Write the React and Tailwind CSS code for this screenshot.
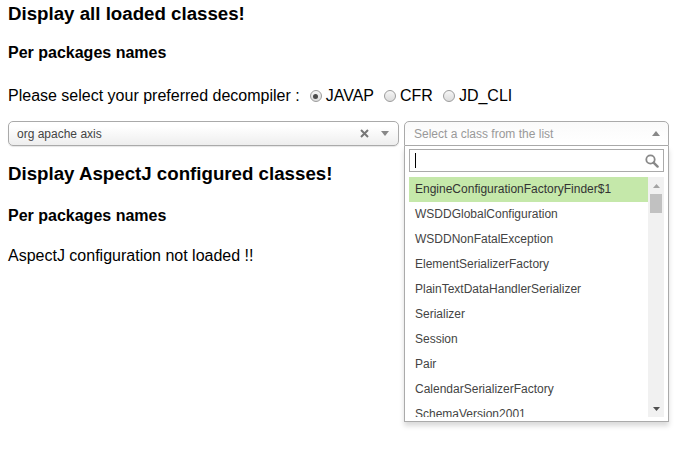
import { useState } from 'react';

const CLASSES = [
  'EngineConfigurationFactoryFinder$1',
  'WSDDGlobalConfiguration',
  'WSDDNonFatalException',
  'ElementSerializerFactory',
  'PlainTextDataHandlerSerializer',
  'Serializer',
  'Session',
  'Pair',
  'CalendarSerializerFactory',
  'SchemaVersion2001',
];

const DECOMPILERS = ['JAVAP', 'CFR', 'JD_CLI'];

function Radio({ checked }) {
  return (
    <span className="w-[12px] h-[12px] rounded-full border border-[#9c9c9c] bg-gradient-to-b from-[#f6f6f6] to-[#dcdcdc] flex items-center justify-center shrink-0">
      {checked && <span className="w-[5px] h-[5px] rounded-full bg-[#4a4a4a]" />}
    </span>
  );
}

function Arrow({ up }) {
  return (
    <svg width="8" height="5" viewBox="0 0 8 5" className="shrink-0">
      <path d={up ? 'M0 5 L4 0 L8 5 Z' : 'M0 0 L4 5 L8 0 Z'} fill="#888" />
    </svg>
  );
}

export default function App() {
  const [decompiler, setDecompiler] = useState('JAVAP');

  return (
    <div className="font-['Liberation_Sans',Arial,sans-serif] text-black px-2 pt-[3px] w-[679px] h-[450px] bg-white">
      <h3 className="text-[18.7px] font-bold leading-[22px]">Display all loaded classes!</h3>
      <h4 className="text-[16px] font-bold leading-[20px] mt-[18px]">Per packages names</h4>

      <div className="flex items-center text-[16px] leading-[20px] mt-[23px]">
        <span>Please select your preferred decompiler :</span>
        {DECOMPILERS.map((d, i) => (
          <label
            key={d}
            onClick={() => setDecompiler(d)}
            className={`flex items-center gap-[4px] cursor-pointer ${i === 0 ? 'ml-[10px]' : 'ml-[10px]'}`}
          >
            <Radio checked={decompiler === d} />
            <span>{d}</span>
          </label>
        ))}
      </div>

      <div className="flex gap-[5px] mt-[15px] text-[12px]">
        {/* package select */}
        <div className="w-[391px] h-[25px] border border-[#aaa] rounded-[5px] bg-gradient-to-b from-white from-20% to-[#eee] shadow-[0_1px_1px_rgba(0,0,0,0.1)] flex items-center pl-[8px] pr-[9px] text-[#444]">
          <span className="flex-1">org apache axis</span>
          <svg width="9" height="9" viewBox="0 0 9 9" className="mr-[12px]">
            <path d="M1 1 L8 8 M8 1 L1 8" stroke="#777" strokeWidth="2" />
          </svg>
          <Arrow />
        </div>

        {/* class select, open */}
        <div className="relative w-[265px]">
          <div className="h-[25px] border border-[#aaa] rounded-t-[5px] bg-gradient-to-b from-[#fafafa] to-white flex items-center pl-[9px] pr-[8px] text-[#999]">
            <span className="flex-1">Select a class from the list</span>
            <Arrow up />
          </div>
          <div className="absolute left-0 top-[25px] w-[265px] bg-white border border-t-0 border-[#aaa] shadow-[0_4px_5px_rgba(0,0,0,0.15)] z-10">
            <div className="px-[4px] pt-[3px] pb-[5px]">
              <div className="h-[23px] border border-[#aaa] flex items-center pl-[5px] pr-[4px]">
                <span className="w-px h-[15px] bg-black" />
                <span className="flex-1" />
                <svg width="14" height="14" viewBox="0 0 14 14">
                  <circle cx="5.5" cy="5.5" r="4.2" fill="none" stroke="#888" strokeWidth="1.8" />
                  <path d="M8.6 8.6 L12.6 12.6" stroke="#888" strokeWidth="2.4" strokeLinecap="round" />
                </svg>
              </div>
            </div>
            <div className="flex ml-[4px] mr-[4px] mb-[4px] h-[240px]">
              <ul className="flex-1 overflow-hidden">
                {CLASSES.map((c, i) => (
                  <li
                    key={c}
                    className={`h-[25px] px-[6px] leading-[25px] whitespace-nowrap ${i === 0 ? 'bg-[#c5e8aa] text-[#333]' : 'text-[#444]'}`}
                  >
                    {c}
                  </li>
                ))}
              </ul>
              <div className="w-[16px] bg-[#f1f1f1] flex flex-col items-center">
                <div className="h-[17px] flex items-center justify-center">
                  <svg width="7" height="4" viewBox="0 0 7 4"><path d="M0 4 L3.5 0 L7 4 Z" fill="#a3a3a3" /></svg>
                </div>
                <div className="w-[12px] h-[19px] bg-[#c1c1c1]" />
                <div className="flex-1" />
                <div className="h-[17px] flex items-center justify-center">
                  <svg width="7" height="4" viewBox="0 0 7 4"><path d="M0 0 L3.5 4 L7 0 Z" fill="#505050" /></svg>
                </div>
              </div>
            </div>
          </div>
        </div>
      </div>

      <h3 className="text-[18.7px] font-bold leading-[22px] mt-[17px]">Display AspectJ configured classes!</h3>
      <h4 className="text-[16px] font-bold leading-[20px] mt-[21px]">Per packages names</h4>
      <p className="text-[16px] leading-[20px] mt-[20px]">AspectJ configuration not loaded !!</p>
    </div>
  );
}
